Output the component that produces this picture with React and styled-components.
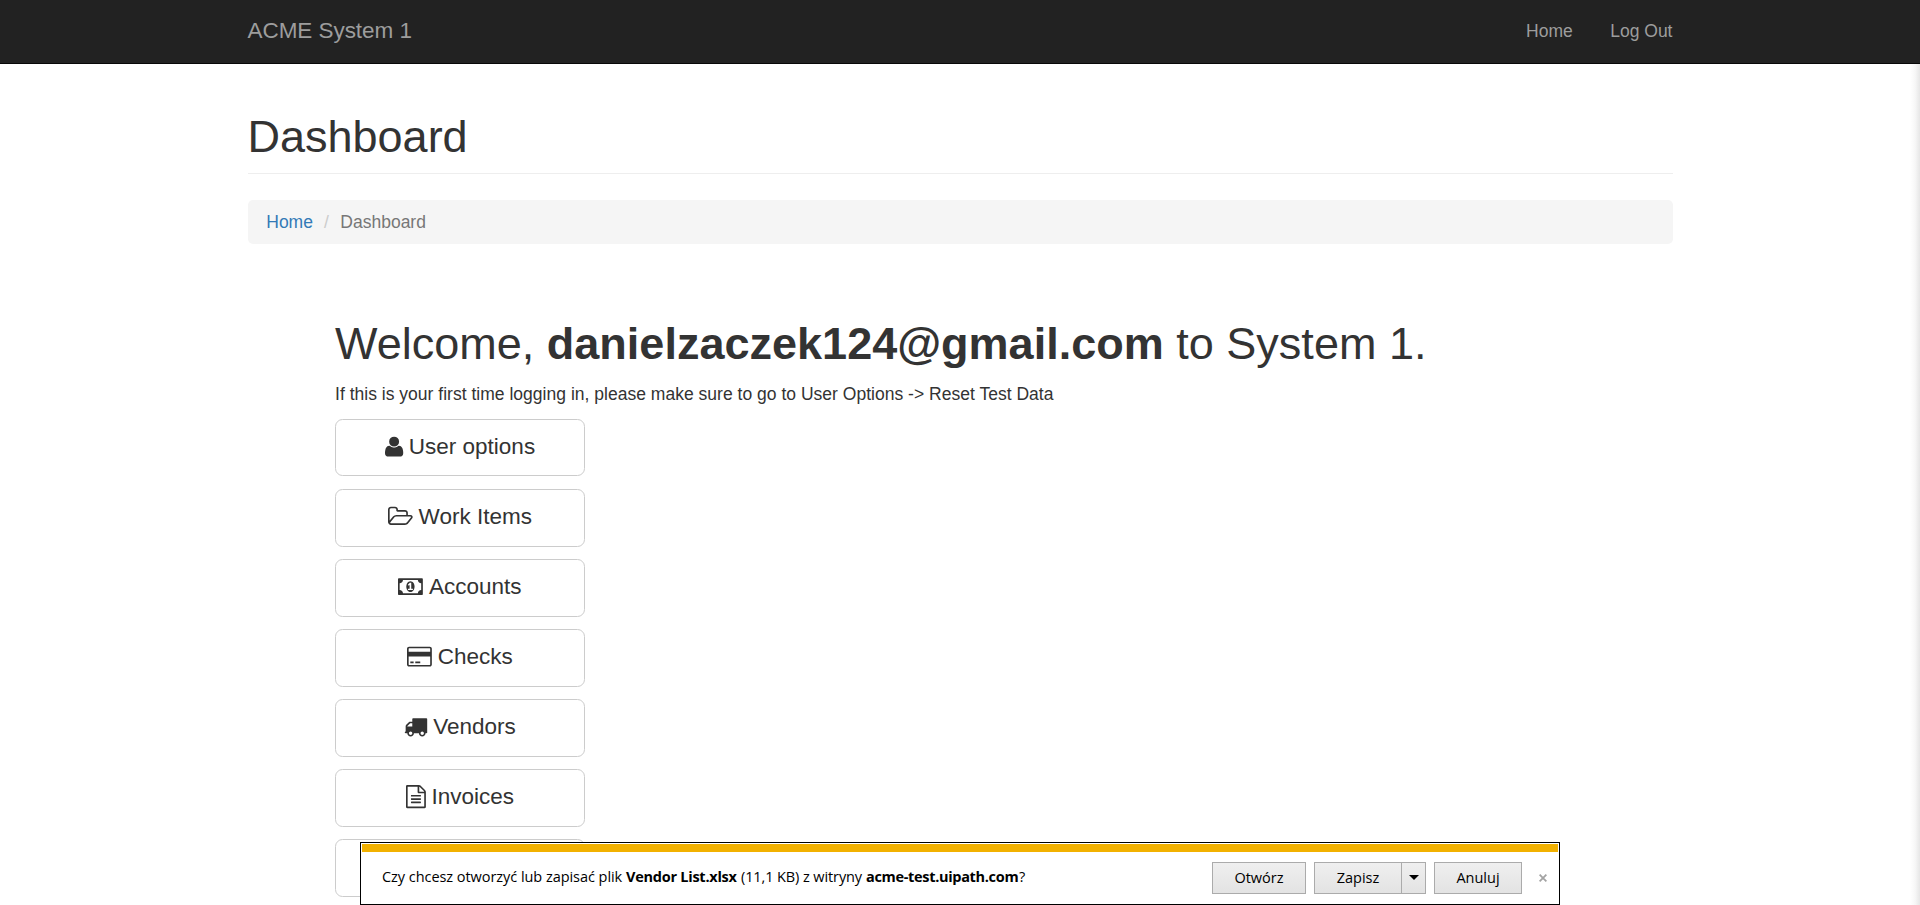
import React from "react";
import styled, { createGlobalStyle } from "styled-components";

const GlobalStyle = createGlobalStyle`
  *, *::before, *::after { box-sizing: border-box; }
  html, body { margin: 0; height: 905px; overflow: hidden; background: #fff; }
  body {
    font-family: "Liberation Sans", Arial, sans-serif;
    font-size: 17.5px;
    line-height: 25px;
    color: #333;
  }
`;

const Page = styled.div`
  position: relative;
  height: 905px;
  overflow: hidden;
`;

const Navbar = styled.nav`
  height: 64px;
  background: #222;
  border-bottom: 1px solid #080808;
`;

const Container = styled.div`
  width: 1425px;
  margin: 0 auto;
`;

const NavRow = styled(Container)`
  display: flex;
  justify-content: space-between;
  align-items: flex-start;
  padding-top: 19px;
`;

const Brand = styled.a`
  font-size: 22.5px;
  line-height: 24px;
  letter-spacing: -0.05px;
  color: #9d9d9d;
`;

const NavLinks = styled.div`
  display: flex;
  gap: 37.5px;
`;

const NavLink = styled.a`
  color: #9d9d9d;
`;

const PageHeader = styled.h1`
  margin: 46px 0 26px;
  height: 64px;
  padding-top: 2px;
  border-bottom: 1px solid #eee;
  font-size: 45px;
  line-height: 50px;
  font-weight: 400;
`;

const Breadcrumb = styled.div`
  display: flex;
  height: 44px;
  padding: 10px 18.75px 8px;
  border-radius: 5px;
  background: #f5f5f5;
  color: #777;
`;

const Crumb = styled.a`
  color: #337ab7;
`;

const Slash = styled.span`
  padding: 0 11.5px 0 11px;
  color: #ccc;
`;

const Main = styled.main`
  padding: 75px 0 0 87.5px;
`;

const Welcome = styled.h1`
  margin: 0;
  font-size: 45px;
  line-height: 50px;
  font-weight: 400;
  letter-spacing: 0.01px;
  white-space: nowrap;
`;

const Hint = styled.p`
  margin: 13px 0 12px;
  letter-spacing: 0.015px;
  white-space: nowrap;
`;

const Menu = styled.div`
  display: grid;
  gap: 12px;
  width: 250px;
`;

const MenuButton = styled.a`
  display: flex;
  align-items: center;
  justify-content: center;
  gap: 5.75px;
  height: 58px;
  padding-bottom: 2px;
  border: 1px solid #ccc;
  border-radius: 7.5px;
  font-size: 22.5px;
  line-height: 30px;

  &:first-child {
    height: 57px;
    margin-bottom: 1px;
    padding-bottom: 1px;
  }
`;

const Glyph = styled.svg`
  display: block;
  height: 23.2px;
  width: ${(p) => (p.$units / 1792) * 23.2}px;
  fill: currentColor;
  overflow: visible;
`;

const EdgeShade = styled.div`
  position: absolute;
  top: 64px;
  right: 0;
  bottom: 0;
  width: 10px;
  background: linear-gradient(to right, #fff, #f7f7f7 50%, #e6e6e6);
`;

const DownloadBar = styled.div`
  position: absolute;
  left: 360px;
  top: 842px;
  width: 1200px;
  height: 63px;
  padding: 1px;
  border: 1px solid #000;
  background: #fff;
  color: #000;
  font-family: "Open Sans", "Noto Sans", sans-serif;
  font-size: 14.5px;
  line-height: 20px;
`;

const Accent = styled.div`
  height: 8px;
  background: #f2b100;
`;

const BarRow = styled.div`
  display: flex;
  align-items: center;
  height: 51px;
  padding: 0 10px 0 20px;
`;

const Message = styled.div`
  flex: 1;
  display: flex;
  padding-bottom: 2px;
  white-space: pre;
`;

const Part = styled.span`
  width: ${(p) => p.$w}px;
  letter-spacing: ${(p) => p.$ls}px;
  font-weight: ${(p) => (p.$bold ? 700 : 400)};
`;

const Action = styled.div`
  display: flex;
  align-items: center;
  justify-content: center;
  width: ${(p) => p.$w}px;
  height: 32px;
  margin-right: ${(p) => p.$gap}px;
  border: 1px solid #ababab;
  background: linear-gradient(#efefef, #e3e3e3);
  padding-top: 1px;
`;

const ActionLabel = styled.span`
  flex: 1;
  text-align: center;
`;

const DropArrow = styled.div`
  display: flex;
  align-items: center;
  justify-content: center;
  width: 24px;
  height: 30px;
  margin-top: -1px;
  border-left: 1px solid #ababab;

  &::before {
    content: "";
    border: 5px solid transparent;
    border-top-color: #000;
    border-bottom: 0;
  }
`;

const CloseIcon = styled.svg`
  width: 8px;
  height: 8px;
  margin: 1px 1px 0 0;
`;

const ICONS = {
  user: [1408, "M1408 131q0 -120 -73 -189.5t-194 -69.5h-874q-121 0 -194 69.5t-73 189.5q0 53 3.5 103.5t14 109t26.5 108.5t43 97.5t62 81t85.5 53.5t111.5 20q9 0 42 -21.5t74.5 -48t108 -48t133.5 -21.5t133.5 21.5t108 48t74.5 48t42 21.5q61 0 111.5 -20t85.5 -53.5t62 -81t43 -97.5t26.5 -108.5t14 -109t3.5 -103.5zM1088 1024q0 -159 -112.5 -271.5t-271.5 -112.5t-271.5 112.5t-112.5 271.5t112.5 271.5t271.5 112.5t271.5 -112.5t112.5 -271.5z"],
  folder: [1920, "M1781 605q0 35 -53 35h-1088q-40 0 -85.5 -21.5t-71.5 -52.5l-294 -363q-18 -24 -18 -40q0 -35 53 -35h1088q40 0 86 22t71 53l294 363q18 22 18 39zM640 768h768v160q0 40 -28 68t-68 28h-576q-40 0 -68 28t-28 68v64q0 40 -28 68t-68 28h-320q-40 0 -68 -28t-28 -68v-853l256 315q44 53 116 87.5t140 34.5zM1909 605q0 -62 -46 -120l-295 -363q-43 -53 -116 -87.5t-140 -34.5h-1088q-92 0 -158 66t-66 158v960q0 92 66 158t158 66h320q92 0 158 -66t66 -158v-32h544q92 0 158 -66t66 -158v-160h192q54 0 99 -24.5t67 -70.5q15 -32 15 -68z"],
  money: [1920, "M768 384h384v96h-128v448h-114l-148 -137l77 -80q42 37 55 57h2v-288h-128v-96zM1280 640q0 -70 -21 -142t-59.5 -134t-101.5 -101t-138 -39t-138 39t-101.5 101t-59.5 134t-21 142t21 142t59.5 134t101.5 101t138 39t138 -39t101.5 -101t59.5 -134t21 -142zM1792 384v512q-106 0 -181 75t-75 181h-1152q0 -106 -75 -181t-181 -75v-512q106 0 181 -75t75 -181h1152q0 106 75 181t181 75zM1920 1216v-1152q0 -26 -19 -45t-45 -19h-1792q-26 0 -45 19t-19 45v1152q0 26 19 45t45 19h1792q26 0 45 -19t19 -45z"],
  card: [1920, "M1760 1408q66 0 113 -47t47 -113v-1216q0 -66 -47 -113t-113 -47h-1600q-66 0 -113 47t-47 113v1216q0 66 47 113t113 47h1600zM160 1280q-13 0 -22.5 -9.5t-9.5 -22.5v-224h1664v224q0 13 -9.5 22.5t-22.5 9.5h-1600zM1760 0q13 0 22.5 9.5t9.5 22.5v608h-1664v-608q0 -13 9.5 -22.5t22.5 -9.5h1600zM256 128v128h256v-128h-256zM640 128v128h384v-128h-384z"],
  truck: [1792, "M640 128q0 52 -38 90t-90 38t-90 -38t-38 -90t38 -90t90 -38t90 38t38 90zM256 640h384v256h-158q-13 0 -22 -9l-195 -195q-9 -9 -9 -22v-30zM1536 128q0 52 -38 90t-90 38t-90 -38t-38 -90t38 -90t90 -38t90 38t38 90zM1792 1216v-1024q0 -15 -4 -26.5t-13.5 -18.5t-16.5 -11.5t-23.5 -6t-22.5 -2t-25.5 0t-22.5 0.5q0 -106 -75 -181t-181 -75t-181 75t-75 181h-384q0 -106 -75 -181t-181 -75t-181 75t-75 181h-64q-3 0 -22.5 -0.5t-25.5 0t-22.5 2t-23.5 6t-16.5 11.5t-13.5 18.5t-4 26.5q0 26 19 45t45 19v320q0 8 -0.5 35t0 38t2.5 34.5t6.5 37t14 30.5t22.5 30l198 198q19 19 50.5 32t58.5 13h160v192q0 26 19 45t45 19h1024q26 0 45 -19t19 -45z"],
  file: [1536, "M1468 1156q28 -28 48 -76t20 -88v-1152q0 -40 -28 -68t-68 -28h-1344q-40 0 -68 28t-28 68v1600q0 40 28 68t68 28h896q40 0 88 -20t76 -48zM1024 1400v-376h376q-10 29 -22 41l-313 313q-12 12 -41 22zM1408 -128v1024h-416q-40 0 -68 28t-28 68v416h-768v-1536h1280zM384 736q0 14 9 23t23 9h704q14 0 23 -9t9 -23v-64q0 -14 -9 -23t-23 -9h-704q-14 0 -23 9t-9 23v64zM1120 512q14 0 23 -9t9 -23v-64q0 -14 -9 -23t-23 -9h-704q-14 0 -23 9t-9 23v64q0 14 9 23t23 9h704zM1120 256q14 0 23 -9t9 -23v-64q0 -14 -9 -23t-23 -9h-704q-14 0 -23 9t-9 23v64q0 14 9 23t23 9h704z"],
};

function Icon({ name }) {
  const [units, d] = ICONS[name];
  return (
    <Glyph $units={units} viewBox={`0 0 ${units} 1792`}>
      <path transform="translate(0 1536) scale(1 -1)" d={d} />
    </Glyph>
  );
}

const ITEMS = [
  ["user", "User options"],
  ["folder", "Work Items"],
  ["money", "Accounts"],
  ["card", "Checks"],
  ["truck", "Vendors"],
  ["file", "Invoices"],
];

export default function App() {
  return (
    <Page>
      <GlobalStyle />
      <Navbar>
        <NavRow>
          <Brand>ACME System 1</Brand>
          <NavLinks>
            <NavLink>Home</NavLink>
            <NavLink>Log Out</NavLink>
          </NavLinks>
        </NavRow>
      </Navbar>
      <Container>
        <PageHeader>Dashboard</PageHeader>
        <Breadcrumb>
          <Crumb>Home</Crumb>
          <Slash>/</Slash>
          <span>Dashboard</span>
        </Breadcrumb>
        <Main>
          <Welcome>
            Welcome, <b>danielzaczek124@gmail.com</b> to System 1.
          </Welcome>
          <Hint>
            If this is your first time logging in, please make sure to go to User Options -&gt; Reset Test Data
          </Hint>
          <Menu>
            {ITEMS.map(([icon, label]) => (
              <MenuButton key={label}>
                <Icon name={icon} />
                <span>{label}</span>
              </MenuButton>
            ))}
            <MenuButton />
          </Menu>
        </Main>
      </Container>
      <EdgeShade />
      <DownloadBar>
        <Accent />
        <BarRow>
          <Message>
            <Part $w={244} $ls={-0.05}>Czy chcesz otworzyć lub zapisać plik</Part>
            <Part $w={115} $ls={-0.25} $bold>Vendor List.xlsx</Part>
            <Part $w={125} $ls={-0.1}>(11,1 KB) z witryny</Part>
            <Part $w={153} $ls={-0.32} $bold>acme-test.uipath.com</Part>
            <Part $w={8} $ls={0}>?</Part>
          </Message>
          <Action $w={94} $gap={8}>Otwórz</Action>
          <Action $w={112} $gap={8}>
            <ActionLabel>Zapisz</ActionLabel>
            <DropArrow />
          </Action>
          <Action $w={88} $gap={17}>Anuluj</Action>
          <CloseIcon viewBox="0 0 9 9">
            <path d="M0.7 0.7L8.3 8.3M8.3 0.7L0.7 8.3" stroke="#a3a3a3" strokeWidth="2" />
          </CloseIcon>
        </BarRow>
      </DownloadBar>
    </Page>
  );
}
